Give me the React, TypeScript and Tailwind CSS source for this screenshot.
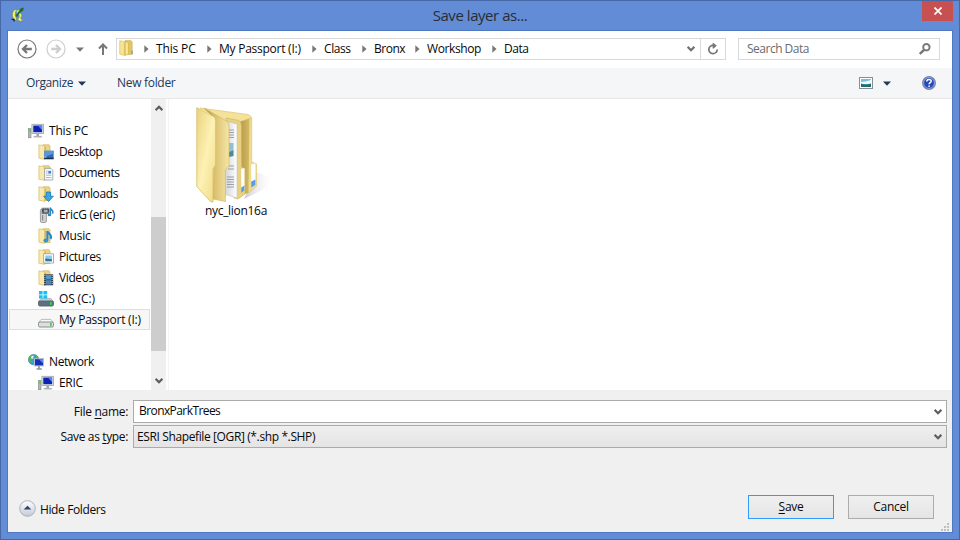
import React from "react";

function QgisLogo() {
  return (
    <svg width="14" height="16" viewBox="0 0 14 16">
      <path d="M5.5 2.2C2.5 2.6 1.3 5 1.4 8C1.5 11 3.2 13 5.5 13.2C6 11 4.2 10.5 4.2 7.5C4.2 5 5 4.4 5.5 2.2Z" fill="#eef66e" stroke="#7d8c3c" strokeWidth=".6" />
      <path d="M8.5 6C11.2 6.5 11.2 9.5 9.4 11.2L11.8 13.4L9 14.2L6.6 12.2C8.4 11 8.8 9 7.8 7.4Z" fill="#eef66e" stroke="#7d8c3c" strokeWidth=".5" />
      <path d="M4.6 8.5L9.6 1.6L12.8 .4L12.2 3.4L8.6 6L6 10.2Z" fill="#1d6e2a" />
      <path d="M5.6 3.4L8.6 3L6 6.6Z" fill="#d7eb52" />
      <path d="M.6 12.4H3V14.4" fill="none" stroke="#182c18" strokeWidth="1.3" />
    </svg>
  );
}

function NavCircle({ color, right }: { color: string; right?: boolean }) {
  return (
    <svg width="20" height="20" viewBox="0 0 20 20" fill="none" stroke={color}>
      <circle cx="10" cy="10" r="9" strokeWidth="1.2" />
      <path
        d={right ? "M5.2 10H14M10 6L14 10L10 14" : "M14.8 10H6M10 6L6 10L10 14"}
        strokeWidth="2.3"
      />
    </svg>
  );
}

function Down({ color }: { color: string }) {
  return (
    <svg width="8" height="5" viewBox="0 0 8 5" className="shrink-0">
      <path d="M0 .5H8L4 4.8Z" fill={color} />
    </svg>
  );
}

function Crumb() {
  return (
    <svg width="5" height="8" viewBox="0 0 5 8" className="shrink-0">
      <path d="M.3 .2L4.6 4L.3 7.8Z" fill="#777" />
    </svg>
  );
}

function Chevron({ up, color = "#5c5c5c" }: { up?: boolean; color?: string }) {
  return (
    <svg width="8" height="6" viewBox="0 0 8 6" className="shrink-0">
      <path d={up ? "M.6 5.2L4 1.8L7.4 5.2" : "M.6 .8L4 4.2L7.4 .8"} fill="none" stroke={color} strokeWidth="2.2" />
    </svg>
  );
}

function FolderBase() {
  return (
    <>
      <path d="M5 .8H11L12 2V14.5H3Z" fill="#ecd588" stroke="#cdb162" strokeWidth=".7" />
      <path d="M.9 .9L6 1.6L6.8 3V15.4L.9 14.2Z" fill="#fae9ac" stroke="#d6bb6c" strokeWidth=".7" />
      <path d="M7.2 2.6V15" stroke="#c5a64f" strokeWidth=".8" />
    </>
  );
}

function Monitor() {
  return (
    <>
      <rect x=".4" y="5.5" width="2.6" height="9.3" fill="#b3b6b8" stroke="#858585" strokeWidth=".6" />
      <path d="M.7 7.4H2.6" stroke="#3bd629" strokeWidth="1.6" />
      <rect x="3.9" y="1.3" width="11.6" height="9.2" fill="#dde0e4" stroke="#9ba1a9" strokeWidth=".8" />
      <rect x="5.3" y="2.6" width="8.8" height="6.6" fill="#0d22b4" />
      <path d="M9.8 2.6H14.1V7.2Z" fill="#5a7eee" />
      <path d="M9.7 10.5V13" stroke="#a3a6aa" strokeWidth="2.6" />
      <path d="M5.6 13.7H13.8" stroke="#b0b3b6" strokeWidth="1.6" />
    </>
  );
}

function Drive({ dark }: { dark?: boolean }) {
  return (
    <>
      <path d="M3.2 7.4H12.8L15.4 10.6H.6Z" fill={dark ? "#c3ccd3" : "#f6f6f6"} stroke="#a0a4a6" strokeWidth=".7" />
      <rect x=".5" y="10" width="15" height="5" rx="1.4" fill={dark ? "#5b7285" : "#dcdedf"} stroke={dark ? "#566069" : "#808486"} strokeWidth=".9" />
      <rect x="12" y="10.9" width="1.7" height="3" fill="#36d83a" />
    </>
  );
}

function NavIcon({ kind }: { kind: string }) {
  return (
    <svg width="16" height="16" viewBox="0 0 16 16" className="shrink-0">
      {kind === "pc" && <Monitor />}
      {["desktop", "documents", "downloads", "music", "pictures", "videos"].includes(kind) && <FolderBase />}
      {kind === "desktop" && (
        <>
          <rect x="6.2" y="6.8" width="9.4" height="8.4" fill="#2f6cb5" />
          <path d="M6.2 6.8H15.6V9.5L6.2 13Z" fill="#5a97d6" />
          <path d="M6.2 14.4H15.6" stroke="#1b2e4e" strokeWidth="1.5" />
          <path d="M6.5 13H8.5" stroke="#b9dcf0" />
        </>
      )}
      {kind === "documents" && (
        <>
          <path d="M6.6 3.4H13L14.8 5.2V15H6.6Z" fill="#fbfcfd" stroke="#929aa3" strokeWidth=".8" />
          <path d="M8 6H9.6M8 8H9.6M8 10.2H13.4M8 12.6H13.4" stroke="#8fa3b8" strokeWidth=".8" />
          <rect x="10.3" y="5.8" width="2.8" height="2.8" fill="#3b86cd" />
        </>
      )}
      {kind === "downloads" && (
        <path d="M8.4 6H12.6V10.2H15.4L10.5 15.5L5.6 10.2H8.4Z" fill="#3ba7e6" stroke="#1776b5" strokeWidth=".8" />
      )}
      {kind === "music" && (
        <>
          <path d="M9.4 3V12.4M9.4 3.4C10.4 6 14.6 6.4 12.6 11" fill="none" stroke="#2489c8" strokeWidth="2" />
          <ellipse cx="7.8" cy="12.6" rx="2.4" ry="2" fill="#2f97d6" />
        </>
      )}
      {kind === "pictures" && (
        <>
          <rect x="5.7" y="4.8" width="9.8" height="9.2" fill="#fff" stroke="#959ba1" strokeWidth=".8" />
          <rect x="7.3" y="6.5" width="6.6" height="5.8" fill="#8cc8ea" />
          <path d="M7.3 9.4L13.9 10.2V12.3H7.3Z" fill="#2c7a8c" />
        </>
      )}
      {kind === "videos" && (
        <>
          <rect x="6" y="4.3" width="9.2" height="11" fill="#3c434b" />
          <rect x="8" y="5" width="5.2" height="4.4" fill="#4a95d0" />
          <rect x="8" y="10.2" width="5.2" height="4.4" fill="#4f86b4" />
          <path d="M6.9 5V15M14.2 5V15" stroke="#e3e6e8" strokeWidth=".9" strokeDasharray="1 1" />
        </>
      )}
      {kind === "device" && (
        <>
          <rect x="2.4" y="2" width="6" height="13.5" rx="1.4" fill="#d0d2d3" stroke="#8b8d8e" strokeWidth=".8" />
          <path d="M4.6 8V13.5" stroke="#8a8c8e" strokeWidth="1.2" />
          <rect x="3.8" y=".8" width="7.6" height="6.2" fill="#444a50" />
          <path d="M4.4 1.7H11.4M4.4 6.1H11.4" stroke="#eee" strokeWidth=".9" strokeDasharray="1 1" />
          <rect x="5.8" y="2.8" width="3.8" height="2.4" fill="#a0b5c0" />
          <path d="M12.4 .6V8M12.4 1.2C13 3.2 16.2 3.6 14.4 6.6" fill="none" stroke="#2c87c9" strokeWidth="1.5" />
          <ellipse cx="11.4" cy="8" rx="1.8" ry="1.3" fill="#2c87c9" />
        </>
      )}
      {kind === "os" && (
        <>
          <Drive dark />
          <path d="M1 0H4.6V3.4H1ZM5.4 0H9.2V3.4H5.4ZM1 4.2H4.6V7.6H1ZM5.4 4.2H9.2V7.6H5.4Z" fill="#12c2f6" />
        </>
      )}
      {kind === "drive" && <Drive />}
      {kind === "network" && (
        <>
          <circle cx="5.6" cy="5.6" r="5.2" fill="#39a0d5" stroke="#377999" strokeWidth=".6" />
          <path d="M1.2 3.6C3.4 .4 6 .6 6.8 1.6L4.4 4.4L3.4 8L.7 6.8ZM7.4 1L10.2 3.2L8.5 4Z" fill="#53b83f" />
          <path d="M3 2.6L5.8 1.4L5 4.6L3.6 5Z" fill="#e0f8ea" />
          <rect x="6.5" y="4.7" width="9" height="7.2" fill="#1230b8" stroke="#b5bfca" strokeWidth="1" />
          <path d="M10.8 5.2H15V9.2Z" fill="#6388ed" />
          <path d="M11 12V15M8.5 15H13.8" stroke="#8d979f" strokeWidth="1.6" />
        </>
      )}
    </svg>
  );
}

const tree = [
  { icon: "pc", label: "This PC", pad: "pl-5", track: "tracking-[-0.2px]" },
  { icon: "desktop", label: "Desktop", pad: "pl-[30px]", track: "tracking-[-0.4px]" },
  { icon: "documents", label: "Documents", pad: "pl-[30px]", track: "tracking-[-0.4px]" },
  { icon: "downloads", label: "Downloads", pad: "pl-[30px]", track: "tracking-[-0.4px]" },
  { icon: "device", label: "EricG (eric)", pad: "pl-[30px]", track: "tracking-[-0.3px]" },
  { icon: "music", label: "Music", pad: "pl-[30px]", track: "tracking-[-0.2px]" },
  { icon: "pictures", label: "Pictures", pad: "pl-[30px]", track: "tracking-[-0.4px]" },
  { icon: "videos", label: "Videos", pad: "pl-[30px]", track: "tracking-[-0.4px]" },
  { icon: "os", label: "OS (C:)", pad: "pl-[30px]", track: "tracking-[-0.15px]" },
  { icon: "drive", label: "My Passport (I:)", pad: "pl-[28px]", track: "tracking-[-0.25px]", selected: true },
  { icon: "", label: "", pad: "", track: "" },
  { icon: "network", label: "Network", pad: "pl-5", track: "tracking-[-0.4px]" },
  { icon: "pc", label: "ERIC", pad: "pl-[30px]", track: "tracking-[-0.3px]" },
];

const crumbs = [
  { label: "This PC", width: "w-[63px] tracking-[-0.15px]" },
  { label: "My Passport (I:)", width: "w-[105px] tracking-[-0.25px]" },
  { label: "Class", width: "w-[50px] tracking-[-0.4px]" },
  { label: "Bronx", width: "w-[53px] tracking-[-0.5px]" },
  { label: "Workshop", width: "w-[77px] tracking-[-0.4px]" },
  { label: "Data", width: "w-[60px] tracking-[-0.5px]" },
];

function LargeFolder() {
  return (
    <svg width="80" height="98" viewBox="0 0 80 98">
      <defs>
        <linearGradient id="front" x1="0" x2="1" y1="0" y2="1">
          <stop offset="0" stopColor="#e9d27c" />
          <stop offset=".5" stopColor="#fdf2b4" />
          <stop offset="1" stopColor="#efd985" />
        </linearGradient>
        <linearGradient id="second" x1="0" x2="1">
          <stop offset="0" stopColor="#a98b3c" />
          <stop offset=".45" stopColor="#dcc271" />
          <stop offset="1" stopColor="#f5e6a6" />
        </linearGradient>
        <linearGradient id="rear" x1="0" x2="1">
          <stop offset="0" stopColor="#b4953e" />
          <stop offset="1" stopColor="#ead484" />
        </linearGradient>
        <linearGradient id="paper" x1="0" x2="1">
          <stop offset="0" stopColor="#cfd1d4" />
          <stop offset="1" stopColor="#ffffff" />
        </linearGradient>
        <linearGradient id="shade" x1="0" x2="1">
          <stop offset="0" stopColor="#a8a8a8" />
          <stop offset="1" stopColor="#ffffff" stopOpacity="0" />
        </linearGradient>
      </defs>
      <path d="M48 93L60 66L79 73L66 84Z" fill="url(#shade)" opacity=".6" />
      <path d="M4 2L52 8.5Q55.5 9.5 55.7 13L44 22L30 16Z" fill="#f4e19a" stroke="#dcc576" strokeWidth=".7" />
      <path d="M43 16L55.7 12V56L60.5 58V80L52 87L47 88Z" fill="url(#rear)" stroke="#d2b75f" strokeWidth=".6" />
      <path d="M53.5 13L55.7 12V56L60.5 58V80L52.5 86.5Z" fill="#eedb91" />
      <path d="M55.2 58.5L59.4 57.5V79L55.2 81.5Z" fill="#fff" />
      <path d="M55.2 75.5L59.4 73.5V79L55.2 81.5Z" fill="#5a9de6" />
      <path d="M30 12L43 14.5Q45.5 16 45.5 20V61L49 63V88L42 93L38 92Z" fill="#e8d182" stroke="#cfb35b" strokeWidth=".6" />
      <path d="M31 15.5L41 18V92L28 88Z" fill="url(#paper)" stroke="#c3c3c3" strokeWidth=".6" />
      <path d="M32.5 24H38M32.5 26.5H38M32.5 29H38M32.5 31.5H38M32 60H38M32 63H38M31 71H38M31 73.5H38M31 76H38M31 78.5H38M31 81H38" stroke="#8f959c" strokeWidth=".9" />
      <path d="M33 37H37.5V44L33 46Z" fill="#93bfd3" />
      <path d="M33 46L37.5 44V50L33 51Z" fill="#4e8a96" />
      <path d="M45.2 63L48.4 62V84.5L45.2 87Z" fill="#fff" />
      <path d="M45.2 81.5L48.4 79.5V84.5L45.2 87Z" fill="#5a9de6" />
      <path d="M8 2L30.5 15Q33 17 33 20V60L29.4 64V95.5L17 93L19 13Z" fill="url(#second)" stroke="#cdb25c" strokeWidth=".6" />
      <path d="M.8 1.7L17.5 10.5Q19.7 12 19.7 15V59L17 63V95.8L15 96L.8 80.5Z" fill="url(#front)" stroke="#d6bd65" strokeWidth=".8" />
    </svg>
  );
}

export default function App() {
  return (
    <div className="flex h-[540px] w-[960px] flex-col overflow-hidden border border-[#4668a7] bg-[#628cd6] font-['Open_Sans','Noto_Sans',sans-serif] text-[12px] leading-[20px] tracking-[-0.3px] text-[#080808]">
      <header className="flex h-[29px] shrink-0 pl-[10px] pr-[6px]">
        <div className="w-[27px] pt-[6px]"><QgisLogo /></div>
        <h1 className="flex-1 pt-[4px] text-center text-[15px] leading-[21px] tracking-[-0.45px] text-[#292d35]">Save layer as...</h1>
        <button className="flex h-5 w-[31px] items-center justify-center bg-[#c75050]" aria-label="Close">
          <svg width="8" height="8" viewBox="0 0 8 8"><path d="M.5 .5L7.5 7.5M7.5 .5L.5 7.5" stroke="white" strokeWidth="1.7" /></svg>
        </button>
      </header>
      <main className="mx-[6px] flex h-[503px] shrink-0 flex-col border border-[#5078c2] bg-[#f0f0f0]">
        <div className="flex h-[37px] shrink-0 bg-white pl-[10px] pt-[7px]">
          <div className="flex h-[22px] w-[98px] items-center">
            <span className="-ml-px flex"><NavCircle color="#777" /></span>
            <span className="ml-[9px] flex"><NavCircle color="#cecece" right /></span>
            <span className="ml-[10px] flex"><Down color="#777" /></span>
            <span className="ml-[14px] flex">
              <svg width="10" height="12" viewBox="0 0 10 12" fill="none" stroke="#777" strokeWidth="2"><path d="M5 12V1.5M1 5.5L5 1.5L9 5.5" /></svg>
            </span>
          </div>
          <div className="flex h-[22px] w-[610px] items-center border border-[#d9d9d9]">
            <svg className="ml-[2px] mr-[10px] -mt-[2px]" width="15" height="16" viewBox="0 0 15 16">
              <path d="M6 .6H12L13.2 2V14.5H5Z" fill="#e3c563" stroke="#d0b251" strokeWidth=".6" />
              <path d="M.7 .7L5.4 1.6V15.6L.7 14Z" fill="#f8e394" stroke="#d9bd5c" strokeWidth=".6" />
              <path d="M6.2 1.6L9.4 2.6V14L6.2 15.6Z" fill="#f8e699" stroke="#cfaa42" strokeWidth=".6" />
              <path d="M13 10.5V14" stroke="#63abc7" strokeWidth="1.3" />
            </svg>
            {crumbs.map((item) => (
              <span key={item.label} className={"flex shrink-0 items-center whitespace-nowrap " + item.width}>
                <Crumb /><span className="ml-[7px]">{item.label}</span>
              </span>
            ))}
            <span className="ml-auto mr-[5px] flex"><Chevron color="#707070" /></span>
            <span className="flex h-[20px] w-[25px] items-center justify-center border-l border-[#d9d9d9]">
              <svg width="12" height="12" viewBox="0 0 12 12"><path d="M6.8 2.4A4.2 4.2 0 1 0 10.2 6.4" fill="none" stroke="#777" strokeWidth="1.7" /><path d="M5.6 0H6.6L9.8 2.8L6.6 5.6H5.6Z" fill="#777" /></svg>
            </span>
          </div>
          <div className="ml-3 flex h-[22px] w-[202px] items-center justify-between border border-[#d9d9d9] pl-2 pr-[8px] text-[#6b6b6b]">
            <span className="tracking-[-0.5px]">Search Data</span>
            <svg width="12" height="12" viewBox="0 0 12 12" fill="none" stroke="#777"><circle cx="7.4" cy="4.2" r="3.2" strokeWidth="1.9" /><path d="M5 6.8L.8 11" strokeWidth="2.4" /></svg>
          </div>
        </div>
        <div className="flex h-[31px] shrink-0 items-center border-b border-[#e5e6e8] bg-[#f5f6f7] pl-[18px] pr-4 text-[#1e395b]">
          <span className="w-[52px] tracking-[-0.4px]">Organize</span><Down color="#1e395b" />
          <span className="ml-[31px]">New folder</span>
          <svg className="ml-auto" width="14" height="12" viewBox="0 0 14 12"><rect x=".5" y=".5" width="13" height="11" fill="#fff" stroke="#858f9a" /><rect x="2" y="2" width="10" height="8" fill="#77baf0" /><path d="M2 5Q6 5 12 3V7H2Z" fill="#f4faf4" /><path d="M2 6.4Q6 8.4 12 6.4V10H2Z" fill="#236d69" /></svg>
          <span className="ml-[10px] flex"><Down color="#1e395b" /></span>
          <svg className="ml-[31px]" width="14" height="14" viewBox="0 0 14 14"><circle cx="7" cy="7" r="6.4" fill="#2549bb" stroke="#85889c" strokeWidth="1.1" /><circle cx="7" cy="7" r="5.4" fill="none" stroke="#a9bcea" strokeWidth=".8" /><path d="M4.8 5.4C4.8 2.7 9.3 2.8 9.2 5.2C9.1 6.6 7.2 6.6 7.1 8.2M7.1 9.5V11" fill="none" stroke="white" strokeWidth="1.5" /></svg>
        </div>
        <div className="flex h-[291px] shrink-0 bg-white">
          <nav className="h-[291px] w-[143px] overflow-hidden pt-[21px]">
            {tree.map((item, i) => (
              <div key={i} className={"flex h-[21px] items-center whitespace-nowrap " + item.pad + " " + item.track + (item.selected ? " mx-px border border-[#dedede] bg-[#f7f7f7]" : "")}>
                {item.icon && <NavIcon kind={item.icon} />}
                <span className="ml-[5px]">{item.label}</span>
              </div>
            ))}
          </nav>
          <div className="flex w-[15px] flex-col items-center bg-[#f0f0f0]">
            <div className="flex h-[118px] pt-[6px]"><Chevron up /></div>
            <div className="h-[134px] w-full bg-[#cdcdcd]" />
            <div className="flex flex-1 items-end pb-[6px]"><Chevron /></div>
          </div>
          <div className="ml-[2px] flex-1 border-l border-[#f3f3f3] pt-[7px]">
            <figure className="ml-[26px] flex w-[82px] flex-col items-center">
              <LargeFolder />
              <figcaption className="-mt-[3px] h-5 leading-[20px]">nyc_lion16a</figcaption>
            </figure>
          </div>
        </div>
        <footer className="flex flex-1 flex-col pt-[10px]">
          <div className="flex h-[23px]">
            <label className="w-[125px] pr-[5px] pt-[2px] text-right">File <u className="underline-offset-2">n</u>ame:</label>
            <div className="flex w-[814px] items-center justify-between border border-[#ababab] bg-white pl-[5px] pr-[4px]"><span className="-mt-[2px] tracking-[-0.58px]">BronxParkTrees</span><Chevron /></div>
          </div>
          <div className="mt-[2px] flex h-[23px]">
            <label className="w-[125px] pr-[5px] pt-[2px] text-right tracking-[-0.36px]">Save as <u className="underline-offset-2">t</u>ype:</label>
            <div className="flex w-[814px] items-center justify-between border border-[#ababab] bg-linear-to-b from-[#efefef] to-[#e4e4e4] pl-[3px] pr-[4px]"><span className="tracking-[-0.38px]">ESRI Shapefile [OGR] (*.shp *.SHP)</span><Chevron /></div>
          </div>
          <div className="mt-[47px] flex pl-[11px]">
            <svg className="mt-[5px]" width="17" height="17" viewBox="0 0 17 17"><defs><linearGradient id="round" x1="0" x2="0" y1="0" y2="1"><stop stopColor="#fff" /><stop offset="1" stopColor="#c3c9d2" /></linearGradient></defs><circle cx="8.5" cy="8.5" r="7.8" fill="url(#round)" stroke="#a9b1be" /><path d="M8.5 5.8L12.3 9.6H4.7Z" fill="#26437a" /></svg>
            <span className="ml-1 mt-[5px] tracking-[-0.38px]">Hide Folders</span>
            <button className="ml-auto h-6 w-[86px] border border-[#3399ff] bg-linear-to-b from-[#efefef] to-[#e5e5e5]"><u className="underline-offset-2">S</u>ave</button>
            <button className="ml-[14px] mr-[18px] h-6 w-[86px] border border-[#acacac] bg-linear-to-b from-[#efefef] to-[#e5e5e5]">Cancel</button>
          </div>
          <svg className="ml-auto mr-[3px] mt-[3px]" width="8" height="8" viewBox="0 0 8 8"><path d="M6 0h2v2h-2zM3 3h2v2h-2zM6 3h2v2h-2zM0 6h2v2h-2zM3 6h2v2h-2zM6 6h2v2h-2z" fill="#bfbfbf" /></svg>
        </footer>
      </main>
    </div>
  );
}
